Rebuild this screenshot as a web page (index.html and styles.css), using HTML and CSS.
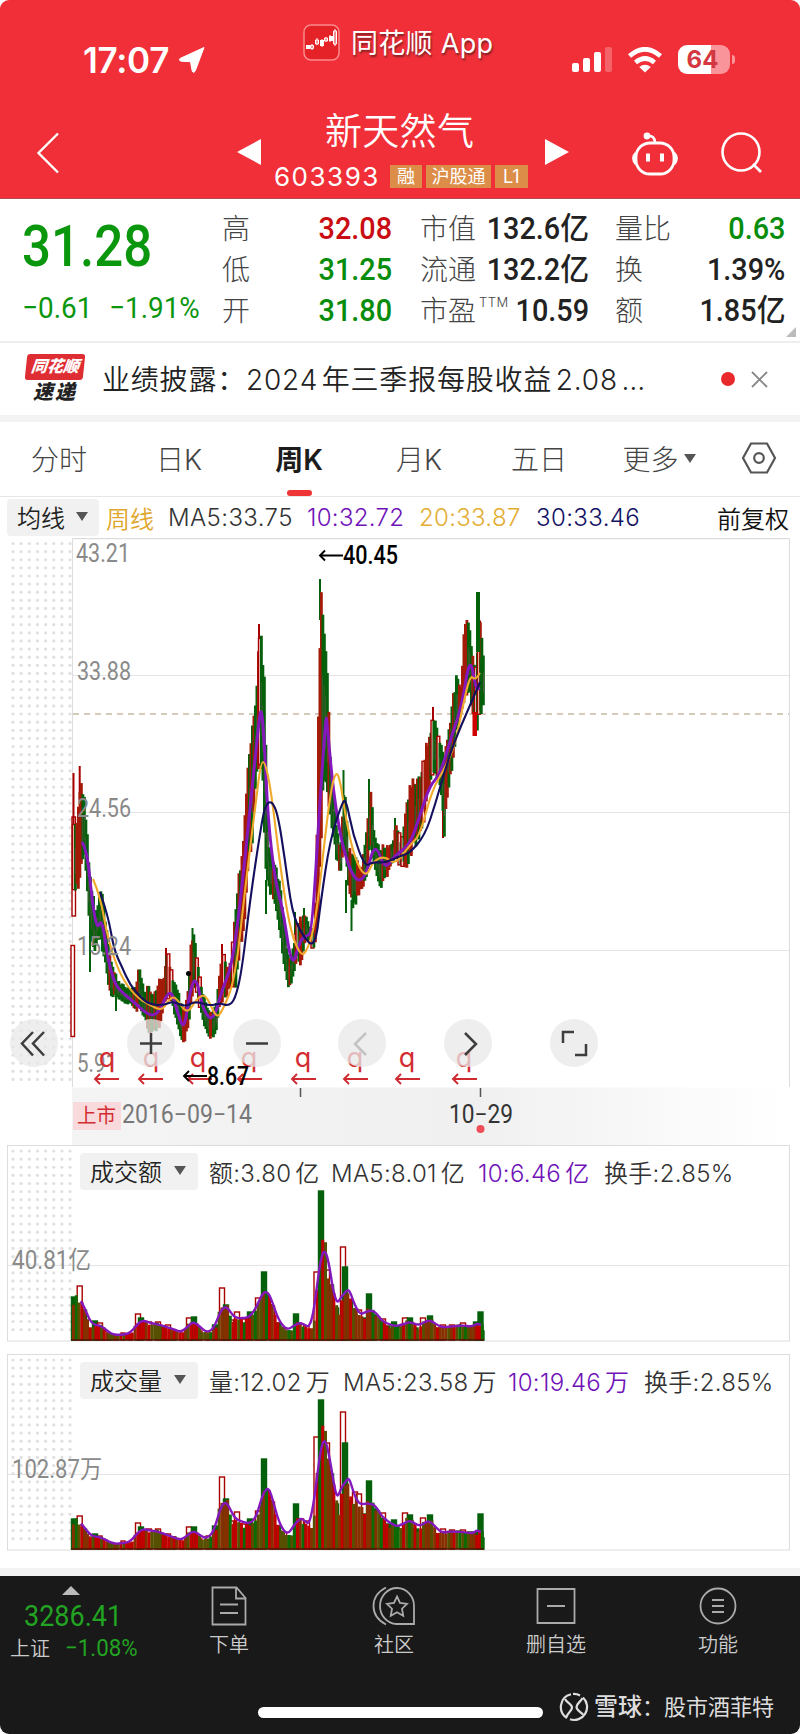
FILE: index.html
```html
<!DOCTYPE html>
<html lang="zh-CN">
<head>
  <meta charset="UTF-8" />
  <title>新天然气 603393</title>
  <link rel="stylesheet" href="styles.css">
</head>
<body>
<div class="phone">

  <header class="header">
    <div class="status">
      <div class="clock">17:07
        <svg width="28" height="28" viewBox="0 0 28 28"><path d="M26 1.500 2 12.500Q0 14 3 15.200L12.500 15.700 14.200 25Q15.500 28 17.200 25Z" fill="#fff" stroke="#fff" stroke-linejoin="round"/></svg>
      </div>
      <div class="app-name">
        <svg width="37" height="37" viewBox="0 0 37 37">
          <rect x="1" y="1" width="35" height="35" rx="7" fill="#e52228" stroke="#fa8a8c" stroke-width="1.500"/>
          <g fill="none" stroke="#fff"><path d="M9 20v6M14 14v7M19 15v8M23 13v5M27 11v7M32 5v17"/><path d="M7.500 21.500h3v3h-3zM12.500 16h3v4h-3zM21.500 14h3v3h-3zM30.500 7h3v13h-3z"/></g>
          <path d="M3 21h4v4H3zM17 16h4v6h-4zM26 12h4v5h-4z" fill="#fff"/>
        </svg>
        <span>同花顺 App</span>
      </div>
      <div class="signals">
        <svg width="40" height="26" viewBox="0 0 40 26" fill="#fff"><rect x="0" y="16" width="7" height="9" rx="2"/><rect x="11" y="11" width="7" height="14" rx="2"/><rect x="22" y="5" width="7" height="20" rx="2"/><rect x="33" y="0" width="7" height="25" rx="2" opacity=".25"/></svg>
        <svg width="36" height="26" viewBox="0 0 36 26" fill="none" stroke="#fff" stroke-width="4.600"><path d="M2.500 9Q18-4.500 33.500 9"/><path d="M8.500 15.500Q18 7.500 27.500 15.500"/><path d="M18 25.500 12.200 20Q18 15.500 23.800 20Z" fill="#fff" stroke="none"/></svg>
        <div class="battery"><span>64</span></div>
      </div>
    </div>
    <div class="titlebar">
      <svg class="back" width="24" height="42" viewBox="0 0 24 42" fill="none" stroke="#fff" stroke-width="2.400"><path d="M22 1.500 2.500 21 22 40.500"/></svg>
      <svg class="prev" width="24" height="26" viewBox="0 0 24 26"><path d="M24 0v26L0 13z" fill="#fff"/></svg>
      <div class="stock">
        <h1>新天然气</h1>
        <div class="code"><b>603393</b><i>融</i><i>沪股通</i><i>L1</i></div>
      </div>
      <svg class="next" width="24" height="26" viewBox="0 0 24 26"><path d="M0 0v26l24-13z" fill="#fff"/></svg>
      <svg class="robot" width="48" height="44" viewBox="0 0 48 44" fill="none" stroke="#fff" stroke-width="2.800"><rect x="5" y="11" width="38" height="31" rx="14"/><path d="M5 21Q0 26 5 32M43 21q5 5 0 11M24 11Q24 3 16 4" /><circle cx="16" cy="4" r="2" fill="#fff"/><path d="M17 21.500v8M31 21.500v8" stroke-width="4"/></svg>
      <svg class="search" width="42" height="42" viewBox="0 0 42 42" fill="none" stroke="#fff" stroke-width="2.600"><circle cx="20" cy="20" r="18.500"/><path d="m32 32 8 8"/></svg>
    </div>
  </header>

  <section class="quote">
    <div class="price">
      <strong><span class="din">31.28</span></strong>
      <p><span class="din">−0.61</span><span class="din pct">−1.91%</span></p>
    </div>
    <dl class="col c1">
      <div><dt>高</dt><dd class="red"><span class="din">32.08</span></dd></div>
      <div><dt>低</dt><dd class="green"><span class="din">31.25</span></dd></div>
      <div><dt>开</dt><dd class="green"><span class="din">31.80</span></dd></div>
    </dl>
    <dl class="col c2">
      <div><dt>市值</dt><dd><span class="din">132.6亿</span></dd></div>
      <div><dt>流通</dt><dd><span class="din">132.2亿</span></dd></div>
      <div><dt>市盈<sup>TTM</sup></dt><dd><span class="din">10.59</span></dd></div>
    </dl>
    <dl class="col c3">
      <div><dt>量比</dt><dd class="green"><span class="din">0.63</span></dd></div>
      <div><dt>换</dt><dd><span class="din">1.39%</span></dd></div>
      <div><dt>额</dt><dd><span class="din">1.85亿</span></dd></div>
    </dl>
    <span class="corner"></span>
  </section>

  <section class="news">
    <div class="badge"><span class="badge-top">同花顺</span><span class="badge-bottom">速递</span></div>
    <p>业绩披露：<span>2024 年三季报每股收益 2.08 …</span></p>
    <span class="dot"></span>
    <svg width="17" height="17" viewBox="0 0 17 17" stroke="#888" stroke-width="1.800"><path d="m1 1 15 15M16 1 1 16"/></svg>
  </section>

  <nav class="tabs">
    <a>分时</a><a>日K</a><a class="active">周K</a><a>月K</a><a>五日</a><a class="more">更多<i class="arrow"></i></a>
    <a class="gear"><svg width="36" height="32" viewBox="0 0 36 32" fill="none" stroke="#555" stroke-width="2.200"><path d="M10 1.500h16L34 16l-8 14.500H10L2 16z"/><circle cx="18" cy="16" r="4.800"/></svg></a>
  </nav>

  <section class="kline">
    <div class="legend ma">
      <span class="pill">均线<i class="arrow"></i></span>
      <span class="m0">周线</span><span class="m5">MA5:33.75</span><span class="m10">10:32.72</span><span class="m20">20:33.87</span><span class="m30">30:33.46</span><span class="adjust">前复权</span>
    </div>
    <svg id="price" width="800" height="607" viewBox="0 538 800 607"></svg>
    <div class="controls">
      <button><svg viewBox="0 0 48 48"><path d="M23 13 12 24.500l11 12M34 13 23 24.500l11 12"/></svg></button>
      <button><svg viewBox="0 0 48 48"><path d="M24 14v21M13 24.500h22"/></svg></button>
      <button><svg viewBox="0 0 48 48"><path d="M13 24.500h22"/></svg></button>
      <button class="off"><svg viewBox="0 0 48 48"><path d="M28 14 17 25l11 11"/></svg></button>
      <button><svg viewBox="0 0 48 48"><path d="m21 14 11 11-11 11"/></svg></button>
      <button><svg viewBox="0 0 48 48"><path d="M13 24V13h11M36 25v11H25"/></svg></button>
    </div>
  </section>

  <section class="panel">
    <div class="legend">
      <span class="pill">成交额<i class="arrow"></i></span>
      <span class="v1">额:3.80 亿</span><span class="v2">MA5:8.01 亿</span><span class="v3">10:6.46 亿</span><span class="v4">换手:2.85%</span>
    </div>
    <svg id="amount" width="800" height="197" viewBox="0 1145 800 197"></svg>
  </section>

  <section class="panel second">
    <div class="legend">
      <span class="pill">成交量<i class="arrow"></i></span>
      <span class="w1">量:12.02 万</span><span class="w2">MA5:23.58 万</span><span class="w3">10:19.46 万</span><span class="w4">换手:2.85%</span>
    </div>
    <svg id="volume" width="800" height="197" viewBox="0 1145 800 197"></svg>
  </section>

  <footer class="footer">
    <div class="bar">
      <div class="index">
        <i class="up"></i>
        <strong><span class="din">3286.41</span></strong>
        <p>上证<em><span class="din">−1.08%</span></em></p>
      </div>
      <a class="item f1"><svg width="36" height="40" viewBox="0 0 36 40"><path d="M1.500 1.500h24L34.500 12v26.500h-33zM25 1.500V12.500h9.500M9 18.500h18M9 27h18"/></svg>下单</a>
      <a class="item f2"><svg width="44" height="40" viewBox="0 0 44 40"><path d="M14 1.500Q1.500 8 1.500 20T14 38.500M42 38H24.500A17 18 0 1 1 42 20zM25 10.500l3 6.400 7 .9-5 4.900 1.200 7-6.200-3.400-6.200 3.400 1.200-7-5-4.900 7-.9z"/></svg>社区</a>
      <a class="item f3"><svg width="40" height="40" viewBox="0 0 40 40"><path d="M1.500 3h37v34h-37zM11 20h18"/></svg>删自选</a>
      <a class="item f4"><svg width="38" height="40" viewBox="0 0 38 40"><circle cx="19" cy="20" r="17.500"/><path d="M13 14h12M13 20h12M13 26h12"/></svg>功能</a>
    </div>
    <div class="home">
      <span class="home-line"></span>
      <svg width="30" height="30" viewBox="0 0 30 30" fill="none" stroke="#ddd" stroke-width="2.200"><path d="M12 2.300A13 13 0 0 0 8 26M11 27.300A13 13 0 0 0 24 5.500M14 2A13 13 0 0 1 21 3.500"/><path d="M6 7c2 4 7 5 7 8.500S9 20 7.500 25M23.500 6c-2 4-6 5.500-6 9s4 4.500 6.500 7.500"/></svg>
      <span class="mark"><b>雪球</b>：股市酒菲特</span>
    </div>
  </footer>

</div>
<script src="charts.js"></script>
</body>
</html>
```

FILE: styles.css
```css
* {
  box-sizing: border-box;
}

body {
  margin: 0;
  background: #fff;
  font-family: Inter, 'Noto Sans CJK SC', sans-serif;
  color: #222;
}

h1, p, dl, dd {
  margin: 0;
}

i, em {
  font-style: normal;
}

svg {
  display: block;
  flex: none;
}

.phone {
  width: 800px;
  height: 1734px;
  overflow: hidden;
  display: flex;
  flex-direction: column;
  border-radius: 9px;
  white-space: nowrap;
}

.phone > * {
  flex: none;
}

.din {
  display: inline-block;
  font-family: Roboto, 'Noto Sans CJK SC', sans-serif;
  transform: scaleX(0.93);
  transform-origin: right center;
}

.red { color: #c90d12; }
.green { color: #078d0b; }

/* header */
.header {
  height: 199px;
  background: #f12f38;
  color: #fff;
  border-bottom: 1px solid #b54a50;
}

.status {
  height: 96px;
  display: flex;
  align-items: flex-start;
}

.clock {
  width: 303px;
  padding: 39px 0 0 83px;
  display: flex;
  gap: 9px;
  font-size: 35px;
  line-height: 42px;
  font-weight: 600;
  letter-spacing: -0.300px;
}

.clock svg {
  margin-top: 7px;
}

.app-name {
  width: 269px;
  padding-top: 24px;
  display: flex;
  gap: 11px;
  font-size: 27px;
  line-height: 39px;
  letter-spacing: 0.300px;
  text-shadow: 1px 2px 2px #7a2025;
}

.signals {
  padding-top: 45px;
  display: flex;
  gap: 15px;
}

.signals svg {
  margin-top: 2px;
}

.battery {
  width: 52px;
  height: 29px;
  border-radius: 9px;
  background: linear-gradient(90deg, #fff 64%, #f9949a 64%);
  color: #d33840;
  font: 700 24px/29px Inter, sans-serif;
  text-align: center;
  position: relative;
}

.battery span {
  margin-right: 3px;
}

.battery::after {
  content: '';
  position: absolute;
  right: -5px;
  top: 10px;
  width: 3px;
  height: 9px;
  border-radius: 0 4px 4px 0;
  background: #f9949a;
}

.titlebar {
  display: flex;
  height: 102px;
}

.titlebar svg {
  margin-top: 36px;
}

.titlebar .back { margin-left: 36px; }
.titlebar .prev { margin: 43px 0 0 177px; }
.titlebar .next { margin: 43px 0 0 3px; }
.titlebar .robot { margin-left: 62px; }
.titlebar .search { margin-left: 42px; }

.stock {
  width: 271px;
  margin-left: 10px;
}

.stock h1 {
  padding: 12px 0 0 54px;
  font-size: 37px;
  line-height: 48px;
  font-weight: 350;
  letter-spacing: 0.300px;
}

.code {
  display: flex;
  align-items: center;
  height: 40px;
  padding-left: 3px;
}

.code b {
  width: 116px;
  font-size: 26px;
  font-weight: 400;
  letter-spacing: 1.500px;
}

.code i {
  height: 23px;
  margin-right: 4px;
  padding: 0 7px;
  background: #dc8d48;
  font-size: 18px;
  line-height: 23px;
}

.code i:nth-child(3) {
  padding: 0 5.500px;
}

.code i:last-child {
  padding: 0 8px;
}

/* quote */
.quote {
  position: relative;
  height: 144px;
  display: flex;
  border-bottom: 2px solid #eee;
}

.price {
  width: 222px;
  padding: 16px 0 0 22px;
  color: #0a960d;
}

.price .din {
  transform-origin: left center;
}

.price strong {
  display: block;
  font-size: 58px;
  line-height: 61px;
  font-weight: 500;
}

.price strong .din {
  transform: scaleX(0.88);
}

.price p {
  display: flex;
  padding-top: 13px;
  font-size: 30px;
  line-height: 36px;
}

.price .pct {
  margin-left: 11px;
}

.col {
  padding-top: 10px;
}

.c1 { width: 170px; }
.c2 { width: 169px; margin-left: 28px; }
.c3 { width: 170px; margin-left: 26px; }

.col div {
  height: 41px;
  display: flex;
  justify-content: space-between;
}

.col dt {
  font-size: 28px;
  line-height: 40px;
  font-weight: 300;
  color: #444;
}

.col dd {
  width: 0;
  display: flex;
  justify-content: flex-end;
  font-size: 31px;
  line-height: 40px;
  font-weight: 500;
}

.col sup {
  margin-left: 3px;
  font-size: 13px;
  line-height: 1;
  vertical-align: 14px;
  letter-spacing: 0.500px;
}

.corner {
  position: absolute;
  right: 4px;
  bottom: 4px;
  border: 5px solid transparent;
  border-right-color: #bbb;
  border-bottom-color: #bbb;
}

/* news */
.news {
  height: 72px;
  display: flex;
  align-items: center;
  padding-left: 25px;
}

.badge {
  width: 60px;
  height: 50px;
  display: flex;
  flex-direction: column;
  align-items: center;
  font-weight: 900;
  font-style: italic;
}

.badge-top {
  width: 58px;
  height: 26px;
  border-radius: 3px;
  background: #df2d34;
  color: #fff;
  font-size: 16px;
  line-height: 25px;
  text-align: center;
  transform: skewX(-6deg);
}

.badge-bottom {
  font-size: 20px;
  line-height: 24px;
  letter-spacing: 2px;
}

.news p {
  width: 619px;
  margin-left: 17px;
  padding-bottom: 3px;
  font-size: 28px;
  font-weight: 350;
  letter-spacing: 0.800px;
  word-spacing: -5px;
}

.news .dot {
  width: 14px;
  height: 14px;
  margin-right: 16px;
  border-radius: 50%;
  background: #e9282b;
}

/* tabs */
.tabs {
  height: 82px;
  display: flex;
  border-top: 7px solid #f3f3f3;
  border-bottom: 1px solid #e6e6e6;
}

.tabs a {
  width: 120px;
  padding: 0 2px 2px 0;
  display: flex;
  align-items: center;
  justify-content: center;
  position: relative;
  font-size: 28px;
  font-weight: 300;
  color: #444;
}

.tabs .active {
  font-weight: 600;
  color: #1c1c1c;
}

.tabs .active::after {
  content: '';
  position: absolute;
  left: 47px;
  bottom: 0;
  width: 25px;
  height: 6px;
  border-radius: 3px;
  background: #ee3434;
}

.tabs .gear {
  width: 80px;
}

.arrow {
  border: 6.500px solid transparent;
  border-top: 9px solid #555;
  border-bottom: 0;
}

.tabs .arrow {
  margin-left: 5px;
}

/* legends */
.legend {
  display: flex;
  align-items: center;
  height: 36px;
  font-size: 24px;
  font-weight: 350;
  word-spacing: -3px;
  color: #333;
}

.pill {
  height: 37px;
  display: flex;
  align-items: center;
  gap: 12px;
  padding: 0 11px 1px 10px;
  border-radius: 4px;
  background: #f1f1f1;
  color: #222;
}

.ma {
  height: 41px;
  padding: 0 0 1px 7px;
}

.ma .pill {
  width: 92px;
  gap: 11px;
}

.m0 { width: 62px; margin-left: 7px; color: #dfa62b; }
.m5 { width: 139px; letter-spacing: 0.400px; }
.m10 { width: 112px; letter-spacing: 0.300px; color: #6f12b8; }
.m20 { width: 117px; letter-spacing: 0.300px; color: #e3ad32; }
.m30 { width: 181px; letter-spacing: 0.400px; color: #121063; }
.adjust { color: #111; }

.kline {
  position: relative;
}

.controls {
  position: absolute;
  left: 10px;
  top: 522px;
  display: flex;
  gap: 57.800px;
}

.controls button {
  width: 48px;
  height: 48px;
  padding: 0;
  border: 0;
  border-radius: 50%;
  background: rgba(232, 232, 232, 0.75);
}

.controls button:first-child {
  margin-right: 11px;
}

.controls path {
  fill: none;
  stroke: #3d3d3d;
  stroke-width: 2.500;
}

.controls .off path {
  stroke: #c3c3c3;
}

/* volume panels */
.panel {
  position: relative;
  height: 197px;
}

.second {
  margin-top: 12px;
}

.panel .legend {
  position: absolute;
  left: 80px;
  top: 8px;
  letter-spacing: 0.300px;
}

.panel .pill {
  width: 118px;
  margin-right: 11px;
  letter-spacing: 0;
}

.v1 { width: 122px; }
.v2 { width: 147px; }
.v3 { width: 126px; color: #6f12b8; }
.w1 { width: 134px; }
.w2 { width: 165px; }
.w3 { width: 136px; color: #6f12b8; }

/* footer */
.footer {
  height: 167px;
  margin-top: 17px;
  border-top: 8px solid #f3f3f3;
  background: #191919;
  color: #ccc;
}

.bar {
  height: 98px;
  display: flex;
}

.index {
  width: 199px;
  padding: 10px 0 0 10px;
}

.index .din {
  transform-origin: left center;
}

.up {
  display: block;
  width: 0;
  margin-left: 52px;
  border: 9px solid transparent;
  border-top: 0;
  border-bottom: 9px solid #bbb;
}

.index strong {
  display: block;
  margin-left: 14px;
  font-size: 29px;
  line-height: 41px;
  font-weight: 400;
  color: #22a322;
}

.index p {
  font-size: 20px;
  line-height: 22px;
  font-weight: 350;
}

.index em {
  margin-left: 15px;
  font-size: 24px;
  font-weight: 400;
  color: #22a322;
}

.item {
  display: flex;
  flex-direction: column;
  align-items: center;
  gap: 4px;
  padding-top: 10px;
  font-size: 20px;
  line-height: 30px;
  font-weight: 350;
}

.item svg {
  fill: none;
  stroke: #aaa;
  stroke-width: 1.800;
}

.f1 { width: 60px; }
.f2 { width: 60px; margin-left: 105px; }
.f3 { width: 70px; margin-left: 97px; }
.f4 { width: 60px; margin-left: 97px; }

.home {
  display: flex;
  align-items: center;
  padding: 14px 0 0 258px;
}

.home-line {
  width: 285px;
  height: 11px;
  margin: 10px 16px 0 0;
  border-radius: 6px;
  background: #fff;
}

.mark {
  margin-left: 5px;
  font-size: 22px;
  line-height: 38px;
  color: #ddd;
}

.mark b {
  font-size: 24px;
  font-weight: 500;
}

/* text inside the charts */
.axis {
  font: 400 25px Roboto, 'Noto Sans CJK SC', sans-serif;
  fill: #8a8a8a;
}

.note {
  font: 500 25px Roboto, sans-serif;
  fill: #000;
}

.date {
  font: 400 25px Roboto, sans-serif;
  fill: #777;
}

.date-now {
  fill: #333;
}

.listed {
  font: 400 20px 'Noto Sans CJK SC', sans-serif;
  fill: #d32c32;
}

.rights {
  font: 400 27px Inter, sans-serif;
  fill: #d32c32;
}
```

FILE: charts.js
```js
const RED = '#a80000', GREEN = '#04600a';
const PURPLE = '#8418bd', ORANGE = '#f0aa2c', NAVY = '#14105e';

// x, high, low of the weekly range
const range = [
  [72,817,893],[76,817,893],[78,790,890],[80,780,870],[83,787,860],[85,815,890],[88,860,925],[90,880,950],[93,915,952],[97,900,945],
  [100,887,948],[103,905,965],[107,940,990],[110,960,997],[116,978,1000],[120,983,1003],[130,988,1006],[135,985,1015],[138,962,1008],
  [143,990,1020],[148,980,1040],[153,993,1035],[158,975,1030],[163,972,1005],[166,948,1000],[171,974,1005],[175,985,1025],[180,1000,1040],
  [183,1008,1046],[187,985,1030],[190,935,1000],[193,930,990],[196,960,1000],[200,985,1015],[205,1000,1035],[210,1012,1042],[215,998,1032],
  [218,970,1010],[222,946,1000],[225,965,998],[230,960,985],[234,905,995],[238,865,960],[243,820,930],[247,750,870],[251,725,850],
  [254,705,800],[257,650,770],[259,625,770],[262,645,800],[264,700,880],[267,840,893],[271,850,900],[276,870,920],[280,890,950],
  [285,940,985],[288,958,989],[292,945,978],[296,920,960],[300,915,970],[304,910,940],[308,925,945],[313,925,952],[315,870,935],
  [318,632,910],[320,579,850],[323,608,800],[325,645,800],[330,770,830],[335,820,860],[339,850,878],[343,775,850],[347,845,890],
  [351,850,910],[355,855,905],[360,870,890],[365,825,885],[369,780,850],[373,830,870],[378,845,893],[385,842,880],[390,845,868],
  [395,822,862],[400,840,868],[405,800,870],[409,780,858],[415,775,848],[420,770,835],[425,742,805],[430,725,785],[433,710,775],
  [437,728,785],[440,742,800],[443,750,838],[446,735,800],[449,715,780],[452,690,762],[455,674,740],[460,685,712],[463,622,702],
  [465,602,695],[468,625,700],[472,660,722],[475,660,737],[478,592,735],[481,640,714],[483,658,714]
];

const wicks = [
  [73.5,773,830,RED],[79.7,766,800,RED],[90,930,972,GREEN],[94,896,920,GREEN],[116,995,1011,GREEN],[166,948,970,RED],[192.5,928,960,GREEN],
  [222,944,975,RED],[259,624,660,RED],[266,880,914,GREEN],[320,579,620,GREEN],[343.5,770,800,GREEN],[346,880,913,GREEN],
  [351.5,900,931,GREEN],[369,779,810,GREEN],[395,818,840,GREEN],[304,908,925,GREEN],[433,707,730,RED],[443,810,838,RED],[295,912,935,GREEN]
];

const lines = {
  [PURPLE]: [[82,842],[87,850],[92,900],[97,930],[102,918],[108,960],[115,985],[125,995],[135,1003],[148,1015],[158,1015],[170,987],[177,1010],[184,1032],[190,990],[196,976],[203,1010],[213,1022],[222,990],[232,965],[240,905],[252,790],[258,730],[261,705],[264,735],[268,820],[275,880],[283,910],[292,970],[300,940],[306,936],[312,933],[320,800],[326,715],[327,722],[333,790],[342,845],[352,875],[360,882],[367,872],[375,842],[385,870],[395,855],[410,845],[420,815],[430,785],[440,775],[452,735],[462,705],[470,655],[476,690],[480,688]],
  [ORANGE]: [[93,879],[100,895],[108,940],[120,975],[135,996],[150,1005],[162,1011],[170,998],[176,997],[187,1015],[197,998],[206,994],[216,1018],[222,1012],[235,980],[245,890],[256,800],[261,762],[265,762],[271,790],[280,865],[290,930],[301,957],[308,949],[316,920],[328,810],[334,775],[339,773],[346,820],[355,860],[366,878],[373,861],[385,856],[395,865],[410,845],[420,835],[432,790],[445,768],[455,745],[462,710],[470,675],[475,680],[480,673]],
  [NAVY]: [[100,892],[108,915],[114,950],[122,967],[130,985],[143,1000],[152,1005],[165,1005],[173,1001],[185,1007],[195,1001],[210,1006],[220,1003],[228,1006],[235,1000],[242,970],[250,900],[262,820],[266,804],[272,801],[278,815],[285,860],[292,912],[302,935],[315,949],[321,900],[330,840],[342,803],[346,799],[353,835],[365,867],[372,862],[385,863],[400,856],[410,853],[425,835],[435,805],[445,770],[455,740],[468,710],[480,682]]
};

// x, amount, volume, rising
const bars = [
  [74,43,30,0],[79.7,54,33,1],[84,30,20,0],[89,12,12,1],[95,19,15,0],[100,17,13,1],[105,9,9,1],[110,6,6,0],[116,5,5,1],[123,7,8,1],
  [130,6,6,1],[138,26,26,1],[141,22,22,0],[149,18,20,1],[158,18,20,1],[163,13,15,0],[168,15,15,1],[174,10,12,0],[182,7,8,1],[189,22,22,1],
  [194,23,22,0],[200,9,10,1],[208,8,13,1],[215,15,23,0],[222,52,72,1],[226,35,50,0],[231,20,28,1],[237,28,37,1],[243,21,25,1],
  [250,28,30,0],[258,42,38,1],[264,68,90,0],[272,34,47,1],[278,17,23,0],[284,12,17,1],[290,9,13,0],[296,26,45,0],[301,16,30,1],
  [307,14,28,1],[312,11,20,1],[316.500,68,112,1],[321,149,149,0],[327,70,106,1],[331,55,75,0],[336,32,45,0],[340,20,25,1],[343,93,137,1],[345,73,106,0],
  [350,40,48,0],[355,31,57,1],[359,30,55,1],[364,22,35,0],[369,46,68,0],[374,25,40,0],[383,21,36,1],[388,14,25,0],[394,18,29,0],
  [400,13,20,1],[405,22,36,1],[410,22,34,0],[416,12,20,0],[423,22,31,1],[430,24,34,0],[437,12,15,1],[443,15,20,1],[452,15,19,1],
  [463,17,19,1],[470,13,17,0],[476,18,17,0],[480.500,28,35,0],[482,9,11,0]
];

const rect = (x, y, w, h, fill, stroke) =>
  `<rect x="${x}" y="${y}" width="${w}" height="${h}" fill="${fill}"${stroke ? ` stroke="${stroke}" stroke-width="1.4"` : ''}/>`;
const line = (x1, y1, x2, y2, color, extra = '') =>
  `<path d="M${x1} ${y1}L${x2} ${y2}" stroke="${color}" fill="none" ${extra}/>`;
const text = (x, y, cls, str, len) =>
  `<text x="${x}" y="${y}" class="${cls}" textLength="${len}" lengthAdjust="spacingAndGlyphs">${str}</text>`;

function at(points, x, k) {
  let i = 1;
  while (i < points.length - 1 && points[i][0] < x) i++;
  const a = points[i - 1], b = points[i];
  const t = Math.min(1, Math.max(0, (x - a[0]) / (b[0] - a[0])));
  return a[k] + (b[k] - a[k]) * t;
}

function noise(n) {
  const v = Math.sin(n * 12.9898) * 43758.5453;
  return v - Math.floor(v);
}

function smooth(points) {
  let d = `M${points[0][0]} ${points[0][1]}`;
  for (let i = 1; i < points.length - 1; i++) {
    const p = points[i], q = points[i + 1];
    d += `Q${p[0]} ${p[1]} ${(p[0] + q[0]) / 2} ${(p[1] + q[1]) / 2}`;
  }
  const e = points[points.length - 1];
  return d + `L${e[0]} ${e[1]}`;
}

function dots(y1, y2) {
  let s = '';
  for (let y = y1; y < y2; y += 8.12)
    for (let x = 13; x < 72; x += 8.15) s += `<circle cx="${x}" cy="${y}" r="1.6" fill="#e0e0e0"/>`;
  return s;
}

function drawPrice() {
  let s = '<defs><linearGradient id="fade"><stop offset="0" stop-color="#f4f4f4"/><stop offset=".55" stop-color="#f0f0f0"/><stop offset=".98" stop-color="#fff"/></linearGradient></defs>';
  s += dots(543.5, 1084);
  s += rect(72, 1087.5, 728, 57.5, 'url(#fade)');
  s += line(72.500, 1087, 72.500, 538.5, '#ddd') + line(72.500, 538.5, 789.500, 538.5, '#ddd', 'stroke-width="1.500"') + line(789.500, 538.5, 789.500, 1087, '#ddd');
  [675.5, 812.5, 950.5].forEach(y => s += line(73, y, 789, y, '#e4e4e4'));
  s += line(73, 714, 789, 714, '#c9bba5', 'stroke-dasharray="6 5" stroke-width="1.500"');

  s += rect(71, 945.5, 3.5, 91, '#fff', RED) + rect(72, 817, 3.500, 99, '#fff', RED);
  wicks.forEach(w => s += line(w[0], w[1], w[0], w[2], w[3], 'stroke-width="2"'));
  for (let x = 72.5, n = 0; x < 483; x += 1.5, n++) {
    const top = at(range, x, 1), low = at(range, x, 2), h = low - top;
    const slope = at(range, x + 4, 1) + at(range, x + 4, 2) - at(range, x - 4, 1) - at(range, x - 4, 2);
    const up = noise(n) < (slope < -6 ? 0.62 : slope > 6 ? 0.14 : 0.42);
    const a = top + noise(n + 500) * h * 0.16, b = low - noise(n + 900) * h * 0.16;
    const hollow = up && noise(n + 300) < 0.18;
    s += rect(x, a, 2.8, Math.max(3, b - a), hollow ? '#f6d9d2' : up ? '#a31a08' : GREEN, hollow ? RED : '');
    if (!up) s += rect(x + 0.8, a + (b - a) * 0.35, 1.4, (b - a) * 0.4, '#4b5a3a');
  }
  s += rect(476, 592, 4, 60, GREEN) + rect(479.500, 658, 3.200, 56, GREEN) + rect(472.500, 712, 4.5, 24, '#d00000');
  for (const color in lines)
    s += `<path d="${smooth(lines[color])}" stroke="${color}" stroke-width="${color === PURPLE ? 3 : 2.1}" fill="none"/>`;
  s += '<circle cx="188.500" cy="973.500" r="2.5"/>';

  s += text(76, 562, 'axis', '43.21', 54) + text(77, 680, 'axis', '33.88', 54) + text(77, 817, 'axis', '24.56', 54);
  s += text(77, 955, 'axis', '15.24', 54) + text(77, 1072, 'axis', '5.91', 40);

  const arrow = (x, y, color, w) => `<path d="M${x + w} ${y}H${x}m5-5-5 5 5 5" fill="none" stroke="${color}" stroke-width="1.900"/>`;
  [[107,95],[151,139],[198,188],[249,238],[303,292],[355,344],[407,396],[464,453]].forEach(([x, ax]) => {
    s += `<text x="${x}" y="1067" text-anchor="middle" class="rights">q</text>` + arrow(ax, 1079, '#cf2a30', 24);
  });
  s += arrow(320, 555.5, '#000', 23) + text(343, 564, 'note', '40.45', 55);
  s += arrow(184, 1076, '#000', 23) + text(207, 1085, 'note', '8.67', 42);

  s += line(300.500, 1088, 300.500, 1097, '#555', 'stroke-width="1.500"') + line(480.500, 1088, 480.500, 1097, '#555', 'stroke-width="1.500"');
  s += rect(73, 1102, 48, 28, '#f8d9dc') + text(77, 1123, 'listed', '上市', 39);
  s += text(122, 1123, 'date', '2016−09−14', 130) + text(449, 1123, 'date date-now', '10−29', 64);
  s += '<circle cx="480.500" cy="1129" r="4" fill="#ee4e58"/>';
  document.getElementById('price').innerHTML = s;
}

function drawBars(id, k, label, len) {
  const base = 1340;
  let s = dots(1151, 1336);
  s += `<rect x="7.500" y="1145.500" width="782" height="195.500" fill="none" stroke="#ddd"/>` + line(8, 1265.5, 789, 1265.5, '#e4e4e4');
  // dense background of narrow weekly bars
  const avg = x => {
    let t = 0, n = 0;
    for (let d = -6; d <= 6; d++) { t += at(bars, x + d, k); n++; }
    return t / n;
  };
  bars.forEach(b => {
    const h = b[k], w = h > 14 ? 5 : 4;
    s += rect(b[0] - w / 2, base - h, w, h, b[3] ? '#fff' : GREEN, b[3] ? RED : GREEN);
  });
  for (let x = 72, n = 0; x < 483; x += 2.8, n++) {
    const h = Math.min(at(bars, x, k), avg(x)) * (0.82 + noise(n) * 0.2);
    s += rect(x, base - h, 3, h, ['#c10000', '#565000', '#863000', '#0d6b05'][Math.floor(noise(n + 40) * 3.4)]);
  }
  const pts = [];
  for (let x = 81; x < 482; x += 4) pts.push([x, base - avg(x - 2) * 0.9]);
  s += `<path d="${smooth(pts)}" fill="none" stroke="${PURPLE}" stroke-width="2.4"/>`;
  s += line(71, base, 484, base, '#4c1000', 'stroke-width="1.500"');
  s += text(12, 1269, 'axis', label, len);
  document.getElementById(id).innerHTML = s;
}

drawPrice();
drawBars('amount', 1, '40.81亿', 79);
drawBars('volume', 2, '102.87万', 90);
```
